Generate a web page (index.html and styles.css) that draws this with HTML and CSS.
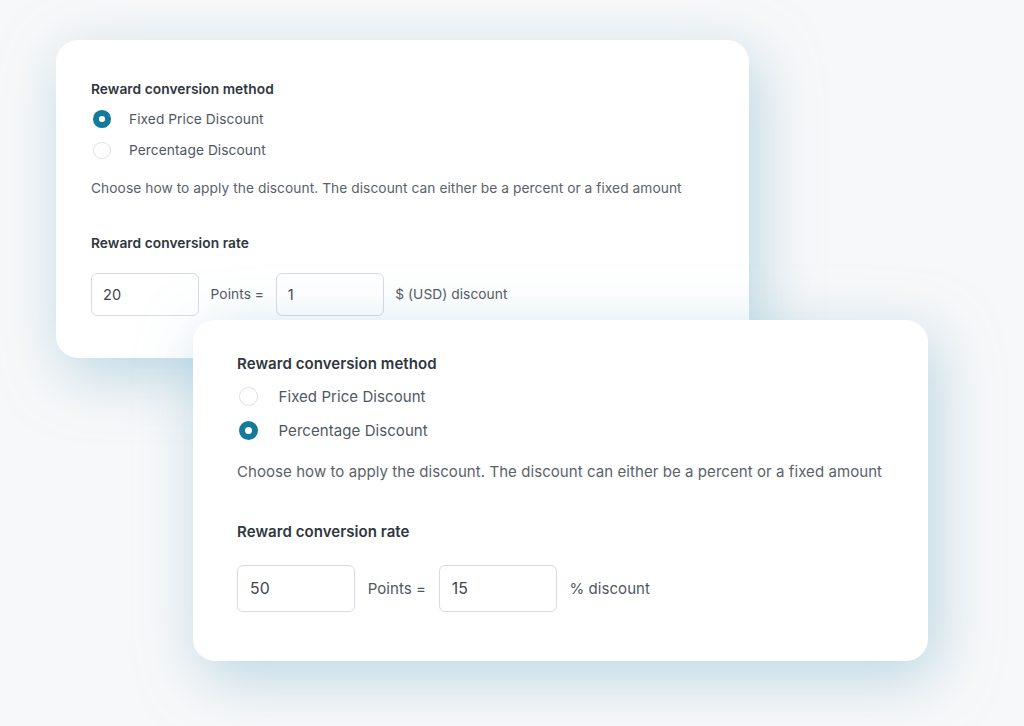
FILE: index.html
```html
<!DOCTYPE html>
<html lang="en">
<head>
<meta charset="utf-8">
<title>Reward conversion settings</title>
<link rel="stylesheet" href="styles.css">
</head>
<body>
<main class="stage">
  <section class="card card-a">
    <h3 class="field-title">Reward conversion method</h3>
    <div class="radios">
      <label class="radio"><span class="dot is-checked"></span>Fixed Price Discount</label>
      <label class="radio"><span class="dot"></span>Percentage Discount</label>
    </div>
    <p class="help">Choose how to apply the discount. The discount can either be a percent or a fixed amount</p>
    <h3 class="field-title rate-title">Reward conversion rate</h3>
    <div class="rate-row">
      <span class="input">20</span>
      <span class="unit">Points =</span>
      <span class="input">1</span>
      <span class="unit">$ (USD) discount</span>
    </div>
  </section>
  <section class="card card-b">
    <h3 class="field-title">Reward conversion method</h3>
    <div class="radios">
      <label class="radio"><span class="dot"></span>Fixed Price Discount</label>
      <label class="radio"><span class="dot is-checked"></span>Percentage Discount</label>
    </div>
    <p class="help">Choose how to apply the discount. The discount can either be a percent or a fixed amount</p>
    <h3 class="field-title rate-title">Reward conversion rate</h3>
    <div class="rate-row">
      <span class="input">50</span>
      <span class="unit">Points =</span>
      <span class="input">15</span>
      <span class="unit">% discount</span>
    </div>
  </section>
</main>
</body>
</html>
```
FILE: styles.css
```css
* { box-sizing: border-box; }
html, body {
  margin: 0;
  padding: 0;
}
body {
  width: 1024px;
  height: 726px;
  overflow: hidden;
  background: #f7f8f9;
  font-family: Inter, "Noto Sans", sans-serif;
}
.stage {
  display: grid;
  align-items: start;
  justify-items: start;
  padding: 40px 0 0 56px;
}
.card {
  --k: 1;
  grid-area: 1 / 1;
  background: #ffffff;
  border-radius: 22px;
  box-shadow: 8px 16px 60px rgba(135, 185, 208, 0.55);
  font-size: calc(var(--k) * 13.75px);
  letter-spacing: 0.004em;
}
.card-a {
  width: 693px;
  padding: 41px 0 42px 35px;
}
.card-b {
  --k: 1.093;
  width: 735px;
  margin: 280px 0 0 137px;
  padding: 35px 0 49px 44px;
}
.field-title {
  margin: 0;
  font-size: 1em;
  font-weight: 600;
  line-height: calc(var(--k) * 16px);
  color: #2f3640;
}
.radios {
  margin-top: calc(var(--k) * 6.5px);
  display: flex;
  flex-direction: column;
}
.radio {
  display: flex;
  align-items: center;
  height: calc(var(--k) * 31.2px);
  gap: calc(var(--k) * 18.5px);
  color: #50585f;
  line-height: calc(var(--k) * 16px);
}
.dot {
  width: calc(var(--k) * 17.5px);
  height: calc(var(--k) * 17.5px);
  margin-left: calc(var(--k) * 2px);
  border-radius: 50%;
  border: 1.5px solid #dde1e6;
  background: #fff;
  flex: none;
}
.dot.is-checked {
  border: calc(var(--k) * 6px) solid #137a9b;
}
.help {
  margin: calc(var(--k) * 14px) 0 0;
  line-height: calc(var(--k) * 16px);
  color: #5a626b;
}
.rate-title {
  margin-top: calc(var(--k) * 39px);
}
.rate-row {
  margin-top: calc(var(--k) * 22px);
  display: flex;
  align-items: center;
  gap: calc(var(--k) * 11.6px);
}
.input {
  width: calc(var(--k) * 108px);
  height: calc(var(--k) * 43px);
  border: 1px solid #d6dce3;
  border-radius: 6px;
  padding-left: calc(var(--k) * 11px);
  display: flex;
  align-items: center;
  font-size: calc(var(--k) * 14.5px);
  color: #3f464d;
  background: #fff;
}
.unit {
  color: #50585f;
}
```
